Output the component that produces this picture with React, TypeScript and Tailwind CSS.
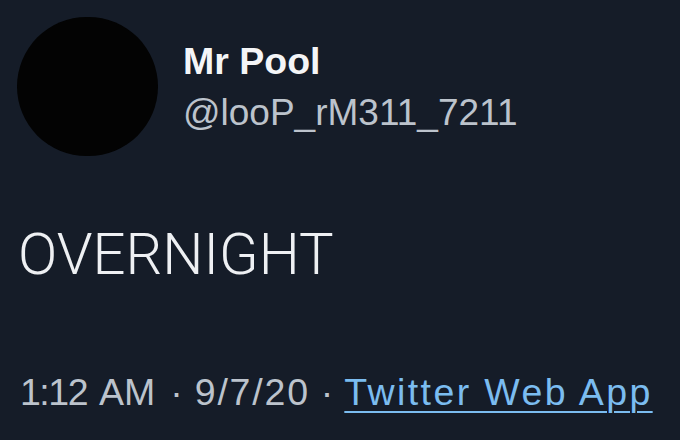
export default function App() {
  return (
    <div
      className="w-[680px] h-[440px] bg-[#151c28] overflow-hidden"
      style={{ fontFamily: '"Liberation Sans", Arial, sans-serif' }}
    >
      <div className="flex items-center pl-[17px] pt-[17px]">
        <div className="w-[141px] h-[139px] rounded-full bg-[#030303] shrink-0" />
        <div className="ml-[25px] flex flex-col">
          <div className="text-[37.5px] leading-[44px] font-bold text-[#f4f5f7]">Mr Pool</div>
          <div className="mt-[8px] text-[37px] leading-[44px] text-[#bcc3cc]">@looP_rM311_7211</div>
        </div>
      </div>

      <div
        className="pl-[18px] pt-[69px] text-[58px] leading-[58px] font-light text-[#eef0f3]"
        style={{ fontFamily: 'Roboto, "Liberation Sans", sans-serif' }}
      >
        OVERNIGHT
      </div>

      {/* time · date · source */}
      <div className="pl-[20px] pt-[89px] text-[37.5px] leading-[40px] text-[#bcc3cc] whitespace-nowrap">
        <span className="tracking-[-1.5px]">1:12</span>
        <span className="ml-[12px]">AM</span>
        <span className="ml-[15px] mr-[12px]">·</span>
        <span className="tracking-[1.8px]">9/7/20</span>
        <span className="px-[11px]">·</span>
        <a className="text-[#7bbcf0] tracking-[2.4px] underline decoration-[2px] underline-offset-[6px]">
          Twitter Web App
        </a>
      </div>
    </div>
  );
}
